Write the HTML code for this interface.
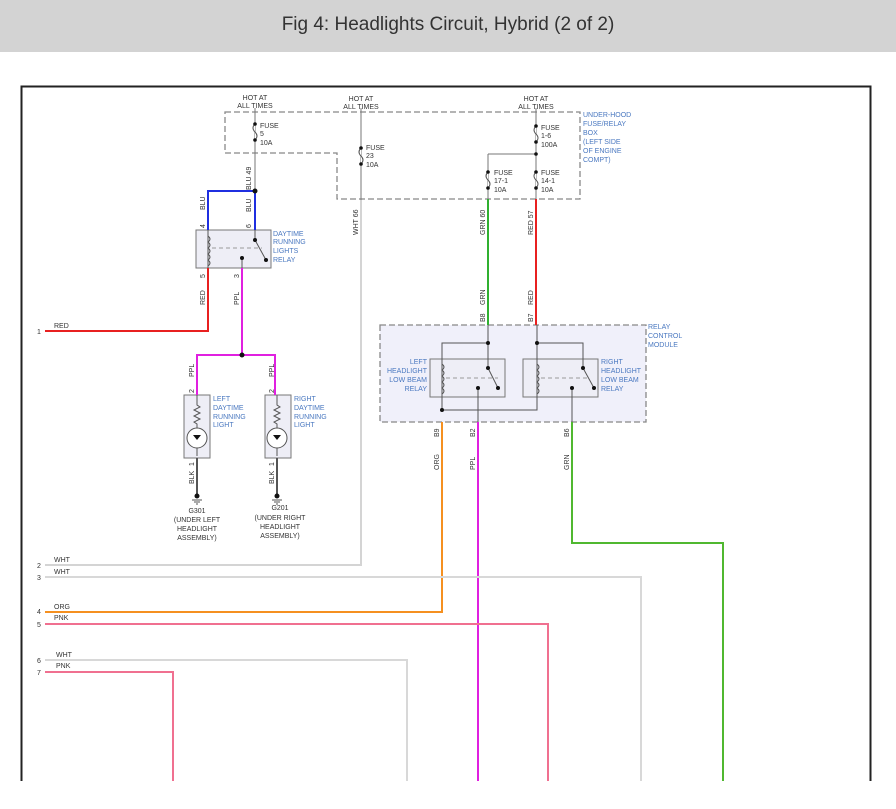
<!DOCTYPE html>
<html><head><meta charset="utf-8"><style>
html,body{margin:0;padding:0;background:#fff;width:896px;height:809px;overflow:hidden}
.hdr{position:absolute;left:0;top:0;width:896px;height:52px;background:#d3d3d3;font:19px "Liberation Sans",sans-serif;color:#333;text-align:center;line-height:50px}
svg{position:absolute;left:0;top:0}
text{font-family:"Liberation Sans",sans-serif;font-size:7px;fill:#333}
.b{fill:#4a78c0}
</style></head><body>
<div class="hdr">Fig 4: Headlights Circuit, Hybrid (2 of 2)</div>
<svg width="896" height="809" viewBox="0 0 896 809">
<path d="M21.5 781V86.5H870.5V781" fill="none" stroke="#222" stroke-width="2"/>
<path d="M225 112H580V199H337V153H225Z" fill="none" stroke="#888" stroke-width="1.3" stroke-dasharray="6,3"/>
<rect x="380" y="325" width="266" height="97" fill="#f0f0fa" stroke="#888" stroke-width="1.3" stroke-dasharray="6,3"/>
<rect x="196" y="230" width="75" height="38" fill="#eeeef6" stroke="#777"/>
<rect x="430" y="359" width="75" height="38" fill="#eeeef6" stroke="#777"/>
<rect x="523" y="359" width="75" height="38" fill="#eeeef6" stroke="#777"/>
<rect x="184" y="395" width="26" height="63" fill="#eeeef6" stroke="#777"/>
<rect x="265" y="395" width="26" height="63" fill="#eeeef6" stroke="#777"/>

<g fill="none" stroke-width="2">
<path d="M255 108V191M361 108V200M536 108V199M488 154H536M488 154V199" stroke="#777" stroke-width="1"/>
<path d="M255 191V230M255 191H208V230" stroke="#1f2fe0"/>
<path d="M45 331H208V268" stroke="#e82020"/>
<path d="M242 268V355M197 395V355H275V395" stroke="#e020e0"/>
<path d="M197 458V495M277 458V495" stroke="#555"/>
<path d="M361 200V565H45" stroke="#d4d4d4"/>
<path d="M488 199V325" stroke="#30b030"/>
<path d="M536 199V325" stroke="#e82020"/>
<path d="M442 422V612H45" stroke="#f59020"/>
<path d="M478 422V781" stroke="#e020e0"/>
<path d="M572 422V543H723V781" stroke="#50b830"/>
<path d="M45 577H641V781" stroke="#d8d8d8"/>
<path d="M45 624H548V781" stroke="#f07090"/>
<path d="M45 660H407V781" stroke="#d8d8d8"/>
<path d="M45 672H173V781" stroke="#f07090"/>
</g>
<g fill="none" stroke="#555" stroke-width="1">
<path d="M488 325V368M488 343H442V410H537V343M537 325V343H583V368"/>
<path d="M488 368L498 388M583 368L594 388M478 388V422M572 388V422"/>
<path d="M442 364q4 3 0 6q4 3 0 6q4 3 0 6q4 3 0 6q4 3 0 6"/>
<path d="M537 364q4 3 0 6q4 3 0 6q4 3 0 6q4 3 0 6q4 3 0 6"/>
<path d="M446 378H498M541 378H590" stroke="#999" stroke-dasharray="4,3"/>
<path d="M208 230V268M208 236q4 3 0 6q4 3 0 6q4 3 0 6q4 3 0 6q4 3 0 6M255 230V240L266 260M242 268V258"/>
<path d="M212 248H262" stroke="#999" stroke-dasharray="4,3"/>
<path d="M197 395V405l3 2-6 3 6 3-6 3 6 3-6 3 3 2V456M277 395V405l3 2-6 3 6 3-6 3 6 3-6 3 3 2V456"/>
<circle cx="197" cy="438" r="10" fill="#fff"/><circle cx="277" cy="438" r="10" fill="#fff"/>
<path d="M255 124q-4 4 0 8q4 4 0 8M361 148q-4 4 0 8q4 4 0 8M536 126q-4 4 0 8q4 4 0 8M488 172q-4 4 0 8q4 4 0 8M536 172q-4 4 0 8q4 4 0 8" fill="#fff"/>
<path d="M192 500h10M194 502h6M196 504h2M272 500h10M274 502h6M276 504h2"/>
</g>
<g fill="#111">
<circle cx="255" cy="191" r="2.5"/><circle cx="242" cy="355" r="2.5"/>
<circle cx="488" cy="343" r="2"/><circle cx="537" cy="343" r="2"/><circle cx="442" cy="410" r="2"/>
<circle cx="488" cy="368" r="2"/><circle cx="498" cy="388" r="2"/><circle cx="478" cy="388" r="2"/>
<circle cx="583" cy="368" r="2"/><circle cx="594" cy="388" r="2"/><circle cx="572" cy="388" r="2"/>
<circle cx="255" cy="240" r="2"/><circle cx="266" cy="260" r="2"/><circle cx="242" cy="258" r="2"/>
<circle cx="255" cy="124" r="1.8"/><circle cx="255" cy="140" r="1.8"/>
<circle cx="361" cy="148" r="1.8"/><circle cx="361" cy="164" r="1.8"/>
<circle cx="536" cy="126" r="1.8"/><circle cx="536" cy="142" r="1.8"/><circle cx="536" cy="154" r="1.8"/>
<circle cx="488" cy="172" r="1.8"/><circle cx="488" cy="188" r="1.8"/><circle cx="536" cy="172" r="1.8"/><circle cx="536" cy="188" r="1.8"/>
<circle cx="197" cy="496" r="2.5"/><circle cx="277" cy="496" r="2.5"/>
<path d="M193 435l4 5 4-5zM273 435l4 5 4-5z"/>
</g>

<text x="255" y="100" text-anchor="middle">HOT AT</text><text x="255" y="108" text-anchor="middle">ALL TIMES</text>
<text x="361" y="101" text-anchor="middle">HOT AT</text><text x="361" y="109" text-anchor="middle">ALL TIMES</text>
<text x="536" y="101" text-anchor="middle">HOT AT</text><text x="536" y="109" text-anchor="middle">ALL TIMES</text>
<text x="260" y="128">FUSE</text><text x="260" y="136">5</text><text x="260" y="145">10A</text>
<text x="366" y="150">FUSE</text><text x="366" y="158">23</text><text x="366" y="167">10A</text>
<text x="541" y="130">FUSE</text><text x="541" y="138">1-6</text><text x="541" y="147">100A</text>
<text x="494" y="175">FUSE</text><text x="494" y="183">17-1</text><text x="494" y="192">10A</text>
<text x="541" y="175">FUSE</text><text x="541" y="183">14-1</text><text x="541" y="192">10A</text>
<text class="b" x="583" y="117">UNDER-HOOD</text><text class="b" x="583" y="126">FUSE/RELAY</text><text class="b" x="583" y="135">BOX</text><text class="b" x="583" y="144">(LEFT SIDE</text><text class="b" x="583" y="153">OF ENGINE</text><text class="b" x="583" y="162">COMPT)</text>
<text class="b" x="273" y="236">DAYTIME</text><text class="b" x="273" y="244">RUNNING</text><text class="b" x="273" y="253">LIGHTS</text><text class="b" x="273" y="262">RELAY</text>
<text class="b" x="648" y="329">RELAY</text><text class="b" x="648" y="338">CONTROL</text><text class="b" x="648" y="347">MODULE</text>
<g text-anchor="end"><text class="b" x="427" y="364">LEFT</text><text class="b" x="427" y="373">HEADLIGHT</text><text class="b" x="427" y="382">LOW BEAM</text><text class="b" x="427" y="391">RELAY</text></g>
<text class="b" x="601" y="364">RIGHT</text><text class="b" x="601" y="373">HEADLIGHT</text><text class="b" x="601" y="382">LOW BEAM</text><text class="b" x="601" y="391">RELAY</text>
<text class="b" x="213" y="401">LEFT</text><text class="b" x="213" y="410">DAYTIME</text><text class="b" x="213" y="419">RUNNING</text><text class="b" x="213" y="427">LIGHT</text>
<text class="b" x="294" y="401">RIGHT</text><text class="b" x="294" y="410">DAYTIME</text><text class="b" x="294" y="419">RUNNING</text><text class="b" x="294" y="427">LIGHT</text>
<g text-anchor="middle"><text x="197" y="513">G301</text><text x="197" y="522">(UNDER LEFT</text><text x="197" y="531">HEADLIGHT</text><text x="197" y="540">ASSEMBLY)</text>
<text x="280" y="510">G201</text><text x="280" y="520">(UNDER RIGHT</text><text x="280" y="529">HEADLIGHT</text><text x="280" y="538">ASSEMBLY)</text></g>
<g>
<text transform="translate(251,190) rotate(-90)">BLU 49</text>
<text transform="translate(205,210) rotate(-90)">BLU</text>
<text transform="translate(251,212) rotate(-90)">BLU</text>
<text transform="translate(205,228) rotate(-90)">4</text>
<text transform="translate(251,228) rotate(-90)">6</text>
<text transform="translate(205,278) rotate(-90)">5</text>
<text transform="translate(239,278) rotate(-90)">3</text>
<text transform="translate(205,305) rotate(-90)">RED</text>
<text transform="translate(239,305) rotate(-90)">PPL</text>
<text transform="translate(194,377) rotate(-90)">PPL</text>
<text transform="translate(274,377) rotate(-90)">PPL</text>
<text transform="translate(194,393) rotate(-90)">2</text>
<text transform="translate(274,393) rotate(-90)">2</text>
<text transform="translate(194,466) rotate(-90)">1</text>
<text transform="translate(274,466) rotate(-90)">1</text>
<text transform="translate(194,484) rotate(-90)">BLK</text>
<text transform="translate(274,484) rotate(-90)">BLK</text>
<text transform="translate(358,235) rotate(-90)">WHT 66</text>
<text transform="translate(485,235) rotate(-90)">GRN 60</text>
<text transform="translate(533,235) rotate(-90)">RED 57</text>
<text transform="translate(485,305) rotate(-90)">GRN</text>
<text transform="translate(533,305) rotate(-90)">RED</text>
<text transform="translate(485,322) rotate(-90)">B8</text>
<text transform="translate(533,322) rotate(-90)">B7</text>
<text transform="translate(439,437) rotate(-90)">B9</text>
<text transform="translate(475,437) rotate(-90)">B2</text>
<text transform="translate(569,437) rotate(-90)">B6</text>
<text transform="translate(439,470) rotate(-90)">ORG</text>
<text transform="translate(475,470) rotate(-90)">PPL</text>
<text transform="translate(569,470) rotate(-90)">GRN</text>
</g>
<text x="37" y="334">1</text><text x="54" y="328">RED</text>
<text x="37" y="568">2</text><text x="54" y="562">WHT</text>
<text x="37" y="580">3</text><text x="54" y="574">WHT</text>
<text x="37" y="614">4</text><text x="54" y="609">ORG</text>
<text x="37" y="627">5</text><text x="54" y="620">PNK</text>
<text x="37" y="663">6</text><text x="56" y="657">WHT</text>
<text x="37" y="675">7</text><text x="56" y="668">PNK</text>
</svg>
</body></html>
